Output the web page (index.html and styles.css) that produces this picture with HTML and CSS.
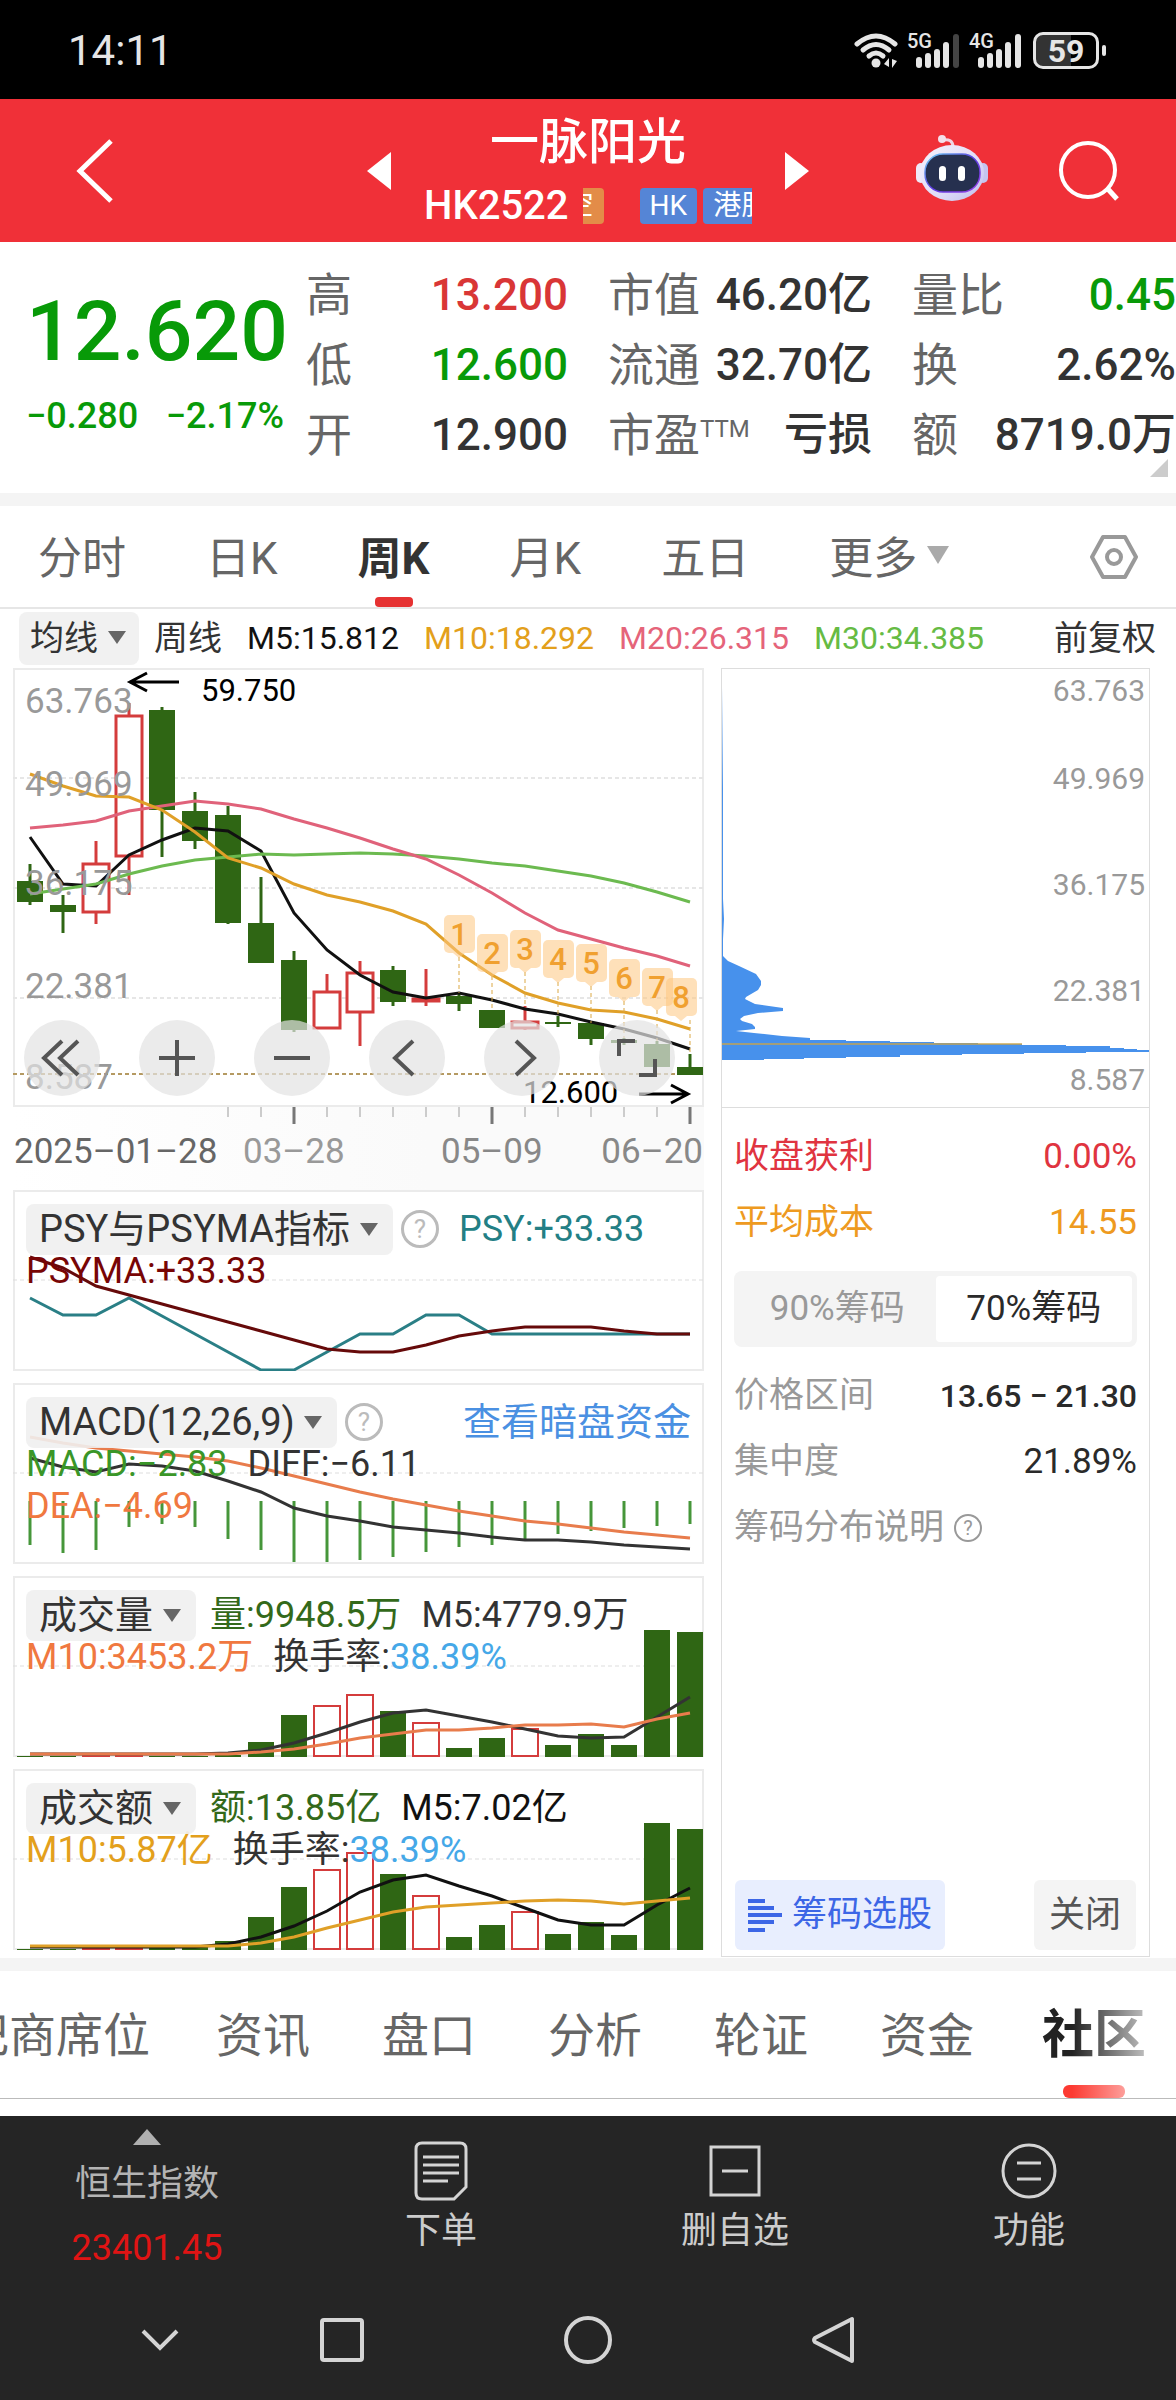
FILE: index.html
```html
<!DOCTYPE html>
<html lang="zh-CN">
<head>
    <meta charset="UTF-8">
    <meta name="viewport" content="width=device-width, initial-scale=1.0">
    <title>一脉阳光 HK2522</title>
    <link rel="stylesheet" href="styles.css">
</head>
<body>
    <!-- 状态栏 -->
    <div class="status-bar">
        <span class="clock">14:11</span>
        <div class="status-icons">
            <svg width="44" height="36" viewBox="0 0 44 36" fill="none" stroke="#e6e6e6" stroke-width="5" stroke-linecap="round">
                <path d="M3 11 Q22 -5 41 11"/>
                <path d="M9 17 Q22 6 35 17"/>
                <path d="M15 23 Q22 17 29 23"/>
                <circle cx="22" cy="30" r="4.5" fill="#e6e6e6" stroke="none"/>
                <path d="M30 31 L35 25 V34 Z M38 26 V35 L43 28 Z" fill="#e6e6e6" stroke="none"/>
            </svg>
            <div class="signal">
                <span>5G</span>
                <svg width="44" height="36" viewBox="0 0 44 36">
                    <g fill="#e6e6e6">
                        <rect x="0" y="24" width="6" height="11" rx="3"/>
                        <rect x="9" y="20" width="6" height="15" rx="3"/>
                        <rect x="18" y="16" width="6" height="19" rx="3"/>
                        <rect x="27" y="9" width="6" height="26" rx="3"/>
                    </g>
                    <rect x="37" y="1" width="6" height="34" rx="3" fill="#444"/>
                </svg>
            </div>
            <div class="signal">
                <span>4G</span>
                <svg width="44" height="36" viewBox="0 0 44 36" fill="#e6e6e6">
                    <rect x="0" y="24" width="6" height="11" rx="3"/>
                    <rect x="9" y="20" width="6" height="15" rx="3"/>
                    <rect x="18" y="16" width="6" height="19" rx="3"/>
                    <rect x="27" y="9" width="6" height="26" rx="3"/>
                    <rect x="37" y="1" width="6" height="34" rx="3"/>
                </svg>
            </div>
            <div class="battery">59</div>
        </div>
    </div>

    <!-- 标题栏 -->
    <header class="header">
        <button class="icon-btn back" aria-label="返回">
            <svg width="40" height="68" viewBox="0 0 40 68" fill="none" stroke="#fff" stroke-width="5">
                <path d="M36 4 L5 34 L36 64"/>
            </svg>
        </button>
        <div class="stock">
            <button class="icon-btn" aria-label="上一只">
                <svg width="24" height="38" viewBox="0 0 24 38"><path d="M24 0 V38 L0 19 Z" fill="#fff"/></svg>
            </button>
            <div class="stock-title">
                <h1>一脉阳光</h1>
                <div class="stock-sub">
                    <span class="code">HK2522</span>
                    <div class="tag-clip"><span class="tag tag-orange">空</span></div>
                    <div class="tags">
                        <span class="tag">HK</span>
                        <span class="tag">港股</span>
                    </div>
                </div>
            </div>
            <button class="icon-btn" aria-label="下一只">
                <svg width="24" height="38" viewBox="0 0 24 38"><path d="M0 0 V38 L24 19 Z" fill="#fff"/></svg>
            </button>
        </div>
        <button class="icon-btn robot" aria-label="智能助手">
            <svg width="72" height="66" viewBox="0 0 72 66">
                <defs>
                    <linearGradient id="head" x1="0" y1="0" x2="1" y2="1">
                        <stop offset="0" stop-color="#f6f2fb"/>
                        <stop offset="0.6" stop-color="#dfdcf8"/>
                        <stop offset="1" stop-color="#bdbcec"/>
                    </linearGradient>
                    <linearGradient id="rim" x1="0" y1="0" x2="1" y2="1">
                        <stop offset="0" stop-color="#6fd6f5"/>
                        <stop offset="0.5" stop-color="#5a3ce0"/>
                        <stop offset="1" stop-color="#9a40e8"/>
                    </linearGradient>
                </defs>
                <path d="M26 5 Q37 3 37 12" fill="none" stroke="#f0d5e4" stroke-width="3"/>
                <circle cx="26" cy="4" r="4" fill="#f4dfea"/>
                <rect x="0" y="28" width="10" height="20" rx="5" fill="#efe9f7"/>
                <rect x="62" y="28" width="10" height="20" rx="5" fill="#c5c5f0"/>
                <ellipse cx="36" cy="38" rx="32" ry="28" fill="url(#head)"/>
                <rect x="9" y="19" width="55" height="38" rx="18" fill="#26304f" stroke="url(#rim)" stroke-width="1.5"/>
                <rect x="23" y="31" width="7" height="15" rx="3.5" fill="#fff"/>
                <rect x="42" y="31" width="7" height="15" rx="3.5" fill="#fff"/>
            </svg>
        </button>
        <button class="icon-btn search" aria-label="搜索">
            <svg width="62" height="62" viewBox="0 0 62 62" fill="none" stroke="#fff" stroke-width="4">
                <circle cx="30" cy="31" r="27"/>
                <path d="M49 49 L59 60" stroke-width="5"/>
            </svg>
        </button>
    </header>

    <!-- 报价 -->
    <section class="quote">
        <div class="price">
            <div class="price-now">12.620</div>
            <div class="price-change"><span>−0.280</span><span>−2.17%</span></div>
        </div>
        <dl class="stats">
            <div><dt>高</dt><dd class="red">13.200</dd></div>
            <div><dt>市值</dt><dd>46.20亿</dd></div>
            <div><dt>量比</dt><dd class="green">0.45</dd></div>
            <div><dt>低</dt><dd class="green">12.600</dd></div>
            <div><dt>流通</dt><dd>32.70亿</dd></div>
            <div><dt>换</dt><dd>2.62%</dd></div>
            <div><dt>开</dt><dd>12.900</dd></div>
            <div><dt>市盈<sup>TTM</sup></dt><dd>亏损</dd></div>
            <div><dt>额</dt><dd>8719.0万</dd></div>
        </dl>
        <i class="corner"></i>
    </section>

    <!-- 周期切换 -->
    <nav class="period">
        <button>分时</button>
        <button>日K</button>
        <button class="active">周K</button>
        <button>月K</button>
        <button>五日</button>
        <button class="more">更多<i class="caret"></i></button>
        <button class="setting" aria-label="设置">
            <svg width="48" height="46" viewBox="0 0 48 46" fill="none" stroke="#999" stroke-width="4" stroke-linejoin="round">
                <path d="M13 3 H35 L46 23 L35 43 H13 L2 23 Z"/>
                <circle cx="24" cy="23" r="7"/>
            </svg>
        </button>
    </nav>

    <div class="ma-row">
        <div class="chip chip-small">
            <select aria-label="主图指标"><option>均线</option></select>
        </div>
        <span class="ma-name">周线</span>
        <span class="ma5">M5:15.812</span>
        <span class="ma10">M10:18.292</span>
        <span class="ma20">M20:26.315</span>
        <span class="ma30">M30:34.385</span>
        <button class="adjust">前复权</button>
    </div>

    <main class="charts">
        <div class="chart-col">
            <div class="chart-main">
                <svg id="kline" viewBox="0 0 691 522"></svg>
                <div class="tools">
                    <button aria-label="最左"><svg viewBox="0 0 76 76"><path d="M38 21 L20 38 L38 55 M54 21 L36 38 L54 55"/></svg></button>
                    <button aria-label="放大"><svg viewBox="0 0 76 76"><path d="M38 20 V56 M20 38 H56"/></svg></button>
                    <button aria-label="缩小"><svg viewBox="0 0 76 76"><path d="M20 38 H56"/></svg></button>
                    <button aria-label="左移"><svg viewBox="0 0 76 76"><path d="M44 21 L26 38 L44 55"/></svg></button>
                    <button aria-label="右移"><svg viewBox="0 0 76 76"><path d="M32 21 L50 38 L32 55"/></svg></button>
                    <button aria-label="全屏"><svg viewBox="0 0 76 76"><path d="M20 36 V21 H36 M56 39 V55 H40"/></svg></button>
                </div>
            </div>

            <div class="indicator">
                <svg id="psy" viewBox="0 0 691 181"></svg>
                <div class="legend">
                    <div class="legend-row">
                        <div class="chip"><select aria-label="指标"><option>PSY与PSYMA指标</option></select></div>
                        <button class="help" aria-label="说明">?</button>
                        <span class="teal">PSY:+33.33</span>
                    </div>
                    <div class="legend-row"><span class="maroon">PSYMA:+33.33</span></div>
                </div>
            </div>

            <div class="indicator">
                <svg id="macd" viewBox="0 0 691 181"></svg>
                <div class="legend">
                    <div class="legend-row">
                        <div class="chip"><select aria-label="指标"><option>MACD(12,26,9)</option></select></div>
                        <button class="help" aria-label="说明">?</button>
                        <a class="dark-link" href="#">查看暗盘资金</a>
                    </div>
                    <div class="legend-row"><span class="lime">MACD:−2.83</span><span>DIFF:−6.11</span></div>
                    <div class="legend-row"><span class="orange">DEA:−4.69</span></div>
                </div>
            </div>

            <div class="indicator">
                <svg id="volume" viewBox="0 0 691 181"></svg>
                <div class="legend">
                    <div class="legend-row">
                        <div class="chip"><select aria-label="指标"><option>成交量</option></select></div>
                        <span class="forest">量:9948.5万</span><span>M5:4779.9万</span>
                    </div>
                    <div class="legend-row"><span class="orange">M10:3453.2万</span><span>换手率:<b>38.39%</b></span></div>
                </div>
            </div>

            <div class="indicator">
                <svg id="amount" viewBox="0 0 691 181"></svg>
                <div class="legend">
                    <div class="legend-row">
                        <div class="chip"><select aria-label="指标"><option>成交额</option></select></div>
                        <span class="forest">额:13.85亿</span><span class="black">M5:7.02亿</span>
                    </div>
                    <div class="legend-row"><span class="gold">M10:5.87亿</span><span>换手率:<b>38.39%</b></span></div>
                </div>
            </div>
        </div>

        <!-- 筹码分布 -->
        <aside class="chips">
            <svg class="dist" viewBox="0 0 427 438">
                <path fill="#4791ec" d="M0 18 L1 120 L1 230 L2 250 L1 270 L1 287 L6 292 L17 297 L34 305 L39 312 L39 316 L36 321 L24 328 L23 330 L33 335 L61 339 L61 342 L36 344 L22 347 L18 350 L20 352 L30 355 L33 358 L33 360 L14 362 L32 364 L60 367 L88 369 V371 H124 V372 H168 V373 H212 V374 H256 V375 H300 V376 H344 V377 H388 V379 H402 V380 H415 V381 H427 V383 H364 V384 H302 V385 H240 V386 H178 V388 H124 V389 H82 V390 H42 V391 H0 Z"/>
                <path d="M0 375 H300" stroke="#c9a44a" stroke-opacity="0.7" stroke-width="2"/>
                <g font-size="30" fill="#999" text-anchor="end">
                    <text x="423" y="32">63.763</text>
                    <text x="423" y="120">49.969</text>
                    <text x="423" y="226">36.175</text>
                    <text x="423" y="332">22.381</text>
                    <text x="423" y="421">8.587</text>
                </g>
            </svg>
            <div class="chips-body">
                <div class="chips-row profit"><span>收盘获利</span><span>0.00%</span></div>
                <div class="chips-row cost"><span>平均成本</span><span>14.55</span></div>
                <div class="segment">
                    <input type="radio" name="ratio" id="ratio90"><label for="ratio90">90%筹码</label>
                    <input type="radio" name="ratio" id="ratio70" checked><label for="ratio70">70%筹码</label>
                </div>
                <div class="chips-row"><span>价格区间</span><strong>13.65 − 21.30</strong></div>
                <div class="chips-row"><span>集中度</span><em>21.89%</em></div>
                <div class="chips-row about"><span>筹码分布说明</span><button class="help help-small" aria-label="说明">?</button></div>
            </div>
            <div class="chips-foot">
                <button class="pick">
                    <svg width="34" height="33" viewBox="0 0 34 33" stroke="#3c66e6" stroke-width="4">
                        <path d="M0 2 H17 M0 9 H26 M0 16 H34 M0 23 H26 M0 31 H17"/>
                    </svg>
                    筹码选股
                </button>
                <button class="close">关闭</button>
            </div>
        </aside>
    </main>

    <!-- 内容标签 -->
    <nav class="tabs">
        <a href="#" class="first">经纪商席位</a>
        <a href="#">资讯</a>
        <a href="#">盘口</a>
        <a href="#">分析</a>
        <a href="#">轮证</a>
        <a href="#">资金</a>
        <a href="#" class="active">社区</a>
    </nav>

    <!-- 底部工具栏 -->
    <footer class="footer">
        <div class="toolbar">
            <button class="index">
                <i class="up"></i>
                <span>恒生指数</span>
                <span class="index-value">23401.45</span>
            </button>
            <button>
                <svg width="60" height="60" viewBox="0 0 60 60" fill="none" stroke="#d4d4d4" stroke-width="3">
                    <path d="M11 2 H49 Q55 2 55 8 V46 L43 58 H11 Q5 58 5 52 V8 Q5 2 11 2 Z"/>
                    <path d="M12 16 H48 M12 24 H48 M12 32 H48 M12 40 H37"/>
                </svg>
                <span>下单</span>
            </button>
            <button>
                <svg width="60" height="60" viewBox="0 0 60 60" fill="none" stroke="#d4d4d4" stroke-width="3">
                    <path d="M6 6 H54 V54 H6 Z M17 30 H43"/>
                </svg>
                <span>删自选</span>
            </button>
            <button>
                <svg width="60" height="60" viewBox="0 0 60 60" fill="none" stroke="#d4d4d4" stroke-width="3">
                    <circle cx="30" cy="30" r="26"/>
                    <path d="M18 22 H42 M18 38 H42"/>
                </svg>
                <span>功能</span>
            </button>
        </div>
        <div class="sys-nav">
            <button aria-label="收起"><svg width="40" height="24" viewBox="0 0 40 24"><path d="M3 3 L20 20 L37 3"/></svg></button>
            <button aria-label="最近任务"><svg width="46" height="46" viewBox="0 0 46 46"><rect x="3" y="3" width="40" height="40" rx="2"/></svg></button>
            <button aria-label="主页"><svg width="50" height="50" viewBox="0 0 50 50"><circle cx="25" cy="25" r="22"/></svg></button>
            <button aria-label="返回"><svg width="44" height="50" viewBox="0 0 44 50"><path d="M40 4 V46 L3 27 Q1 25 3 23 Z" stroke-linejoin="round"/></svg></button>
        </div>
    </footer>

    <script src="script.js"></script>
</body>
</html>
```
FILE: styles.css
```css
* {
    margin: 0;
    padding: 0;
    box-sizing: border-box;
}

body {
    font-family: Roboto, "Noto Sans CJK SC", sans-serif;
    background-color: #fff;
    color: #333;
}

button, select {
    font: inherit;
    color: inherit;
    background: none;
    border: none;
    cursor: pointer;
}

a {
    color: inherit;
    text-decoration: none;
}

svg {
    display: block;
}

.red { color: #d93636; }
.green { color: #089a08; }
.teal { color: #237f85; }
.maroon { color: #780505; }
.lime { color: #3a9628; }
.orange { color: #f07840; }
.forest { color: #33691a; }
.gold { color: #e3a01c; }
.black { color: #111; }

/* 状态栏 */
.status-bar {
    display: flex;
    align-items: center;
    justify-content: space-between;
    height: 99px;
    padding: 2px 77px 0 68px;
    background-color: #000;
    color: #e6e6e6;
}

.clock {
    font-size: 42px;
}

.status-icons {
    display: flex;
    align-items: center;
    gap: 11px;
}

.signal {
    position: relative;
    padding-left: 7px;
}

.signal span {
    position: absolute;
    top: -4px;
    left: -2px;
    font-size: 20px;
    font-weight: 500;
    line-height: 24px;
}

.battery {
    position: relative;
    width: 66px;
    height: 37px;
    border: 3px solid #e6e6e6;
    border-radius: 10px;
    background: linear-gradient(to right, #333 59%, #000 59%);
    font-size: 32px;
    font-weight: 700;
    line-height: 32px;
    text-align: center;
}

.battery::after {
    content: "";
    position: absolute;
    top: 10px;
    right: -10px;
    width: 4px;
    height: 11px;
    border-radius: 2px;
    background-color: #e6e6e6;
}

/* 标题栏 */
.header {
    display: grid;
    grid-template-columns: 1fr 442px 1fr;
    align-items: center;
    height: 143px;
    background-color: #f03038;
    color: #fff;
    position: relative;
}

.icon-btn {
    display: block;
}

.back {
    justify-self: start;
    margin-left: 75px;
}

.stock {
    display: flex;
    align-items: center;
    justify-content: space-between;
}

.stock-title {
    display: flex;
    flex-direction: column;
    align-items: center;
    padding-top: 4px;
}

.stock-title h1 {
    font-size: 49px;
    font-weight: 500;
    line-height: 66px;
}

.stock-sub {
    display: flex;
    align-items: center;
    width: 328px;
    height: 60px;
}

.code {
    font-size: 40px;
    font-weight: 500;
}

.tag-clip {
    display: flex;
    justify-content: flex-end;
    overflow: hidden;
    width: 21px;
    margin: 0 36px 0 14px;
}

.tags {
    display: flex;
    gap: 6px;
    flex: 1;
    overflow: hidden;
}

.tag {
    flex-shrink: 0;
    padding: 0 10px;
    border-radius: 4px;
    background-color: #5585d6;
    font-size: 28px;
    line-height: 36px;
}

.tag-orange {
    background-color: #e38c48;
}

.robot, .search {
    position: absolute;
    top: 36px;
}

.robot {
    right: 188px;
}

.search {
    top: 40px;
    right: 56px;
}

/* 报价 */
.quote {
    position: relative;
    display: grid;
    grid-template-columns: 306px 1fr;
    padding: 18px 0 23px;
    border-bottom: 13px solid #f4f4f4;
}

.price {
    display: flex;
    flex-direction: column;
    justify-content: center;
    padding: 6px 22px 0 26px;
    color: #089a08;
}

.price-now {
    font-size: 84px;
    font-weight: 500;
    line-height: 96px;
    text-align: center;
}

.price-change {
    display: flex;
    justify-content: space-between;
    font-size: 36px;
    font-weight: 500;
    line-height: 72px;
}

.stats {
    display: grid;
    grid-template-columns: 262fr 264fr 264fr;
    column-gap: 40px;
    font-size: 44px;
    line-height: 70px;
}

.stats div {
    display: flex;
    justify-content: space-between;
    white-space: nowrap;
}

.stats dt {
    font-size: 46px;
    color: #666;
}

.stats dd {
    font-weight: 500;
}

.stats sup {
    font-size: 24px;
    line-height: 24px;
    vertical-align: 14px;
}

.corner {
    position: absolute;
    right: 8px;
    bottom: 16px;
    border-left: 18px solid transparent;
    border-bottom: 18px solid #ccc;
}

/* 周期切换 */
.period {
    display: flex;
    align-items: center;
    gap: 80px;
    height: 103px;
    padding: 0 38px;
    border-bottom: 2px solid #e6e6e6;
    font-size: 44px;
    color: #666;
}

.period button {
    position: relative;
    height: 101px;
    padding-bottom: 4px;
}

.period .active {
    font-weight: 700;
    color: #333;
}

.period .active::after {
    content: "";
    position: absolute;
    left: 50%;
    bottom: 0;
    width: 38px;
    height: 10px;
    margin-left: -19px;
    border-radius: 4px;
    background-color: #e63232;
}

.more {
    display: flex;
    align-items: center;
    gap: 10px;
}

.caret {
    border: 11px solid transparent;
    border-top: 18px solid #aaa;
    border-bottom: none;
}

.period .setting {
    margin-left: auto;
    padding: 0;
}

/* 均线 */
.ma-row {
    display: flex;
    align-items: center;
    gap: 25px;
    padding: 3px 20px 3px 19px;
    font-size: 32px;
    line-height: 53px;
}

.ma-row .ma-name {
    margin-left: -10px;
    font-size: 34px;
}

.ma5 { color: #111; }
.ma10 { color: #e3a01c; }
.ma20 { color: #e5647a; }
.ma30 { color: #66bb44; }

.adjust {
    margin-left: auto;
    font-size: 34px;
    line-height: 53px;
}

.chip {
    position: relative;
    border-radius: 8px;
    background-color: rgba(240, 240, 240, 0.9);
}

.chip select {
    display: block;
    appearance: none;
    padding: 0 42px 0 13px;
    height: 51px;
    font-size: 38px;
    color: #333;
}

.chip::after {
    content: "";
    position: absolute;
    top: 19px;
    right: 15px;
    border: 9px solid transparent;
    border-top: 13px solid #666;
    border-bottom: none;
    pointer-events: none;
}

.chip-small select {
    height: 53px;
    padding: 0 41px 0 11px;
    font-size: 34px;
}

.chip-small::after {
    right: 13px;
}

/* 图表 */
.charts {
    display: grid;
    grid-template-columns: 691fr 429fr;
    column-gap: 17px;
    padding: 0 26px 1px 13px;
    border-bottom: 13px solid #f4f4f4;
}

.chart-col {
    display: flex;
    flex-direction: column;
    gap: 12px;
    padding-bottom: 7px;
}

.chart-main {
    position: relative;
    margin-bottom: -12px;
    background: linear-gradient(to right, #fff, #fafafa 60%);
}

.chart-col svg {
    width: 100%;
}

.tools {
    position: absolute;
    top: 352px;
    left: 11px;
    right: 29px;
    display: flex;
    justify-content: space-between;
}

.tools button {
    width: 76px;
    height: 76px;
    border-radius: 50%;
    background-color: rgba(227, 227, 227, 0.7);
}

.tools path {
    fill: none;
    stroke: #555;
    stroke-width: 4;
}

.indicator {
    position: relative;
}

.legend {
    position: absolute;
    top: 18px;
    left: 13px;
    right: 13px;
    font-size: 36px;
    line-height: 42px;
    white-space: nowrap;
}

.legend-row {
    display: flex;
    align-items: center;
    gap: 20px;
    height: 42px;
}

.legend-row .chip {
    margin-right: -6px;
}

.legend-row b {
    font-weight: 400;
    color: #45a8e8;
}

.help {
    width: 38px;
    height: 38px;
    border: 3px solid #bbb;
    border-radius: 50%;
    font-size: 26px;
    line-height: 32px;
    color: #bbb;
}

.legend-row .help {
    margin-left: -6px;
}

.dark-link {
    margin-left: auto;
    font-size: 38px;
    color: #4a90e2;
}

/* 筹码分布 */
.chips {
    display: flex;
    flex-direction: column;
    border: 1px solid #ddd;
}

.dist {
    width: 100%;
    border-bottom: 1px solid #ddd;
}

.chips-body {
    padding: 16px 12px 0 12px;
    font-size: 35px;
    line-height: 66px;
    color: #999;
}

.chips-row {
    display: flex;
    justify-content: space-between;
}

.chips-row em, .chips-row strong {
    font-style: normal;
    font-weight: 400;
    color: #2a2a2a;
}

.chips-row strong {
    font-size: 32px;
    font-weight: 500;
}

.profit { color: #e03440; }
.cost { color: #ee9a20; }

.about {
    justify-content: flex-start;
    align-items: center;
    gap: 10px;
}

.help-small {
    width: 28px;
    height: 28px;
    border: 2px solid #999;
    font-size: 20px;
    line-height: 24px;
    color: #999;
}

.segment {
    display: grid;
    grid-template-columns: 1fr 1fr;
    margin: 15px 0 16px;
    padding: 5px;
    border-radius: 8px;
    background-color: #f4f4f4;
    text-align: center;
}

.segment input {
    position: absolute;
    opacity: 0;
}

.segment label {
    border-radius: 4px;
}

.segment input:checked + label {
    background-color: #fff;
    color: #2a2a2a;
}

.chips-foot {
    display: flex;
    justify-content: space-between;
    margin-top: auto;
    padding: 0 13px 6px;
    font-size: 35px;
    line-height: 70px;
}

.pick {
    display: flex;
    align-items: center;
    gap: 10px;
    padding: 0 13px;
    border-radius: 6px;
    background-color: #e8eefe;
    color: #3c66e6;
}

.close {
    padding: 0 15px;
    border-radius: 6px;
    background-color: #f4f4f4;
    font-size: 36px;
    color: #555;
}

/* 内容标签 */
.tabs {
    position: relative;
    display: flex;
    align-items: center;
    justify-content: flex-end;
    gap: 72px;
    overflow: hidden;
    height: 128px;
    margin-bottom: 17px;
    padding-right: 30px;
    border-bottom: 1px solid #bbb;
    font-size: 47px;
    white-space: nowrap;
    color: #666;
}

.tabs a {
    position: relative;
    padding-top: 3px;
    line-height: 124px;
}

.tabs .first {
    margin-right: -6px;
}

.tabs .active {
    margin-left: -4px;
    font-size: 52px;
    font-weight: 700;
    color: #222;
}

.tabs .active::after {
    content: "";
    position: absolute;
    left: 50%;
    bottom: 0;
    width: 62px;
    height: 13px;
    margin-left: -31px;
    border-radius: 6px;
    background-color: #fc3a32;
}

/* 右侧渐隐 */
.tabs::after {
    content: "";
    position: absolute;
    top: 0;
    right: 0;
    width: 104px;
    height: 127px;
    background: linear-gradient(to right, rgba(255, 255, 255, 0), rgba(255, 255, 255, 0.8) 80%);
}

/* 底部 */
.footer {
    background-color: #252525;
    color: #ccc;
}

.toolbar {
    display: grid;
    grid-template-columns: repeat(4, 1fr);
    height: 164px;
    font-size: 36px;
}

.toolbar button {
    display: flex;
    flex-direction: column;
    align-items: center;
    gap: 5px;
    padding-top: 25px;
    line-height: 50px;
}

.toolbar .index {
    gap: 14px;
    padding-top: 13px;
    color: #b4b4b4;
}

.up {
    border: 14px solid transparent;
    border-top: none;
    border-bottom: 16px solid #b0b0b0;
}

.toolbar .index-value {
    color: #e01414;
}

.sys-nav {
    display: grid;
    grid-template-columns: 219fr 246fr 246fr 246fr 219fr;
    align-items: center;
    height: 120px;
}

.sys-nav button {
    justify-self: center;
}

.sys-nav button:first-child {
    justify-self: end;
    margin-right: 39px;
}

.sys-nav svg {
    fill: none;
    stroke: #d4d4d4;
    stroke-width: 4;
}
```
FILE: script.js
```js
const NS = "http://www.w3.org/2000/svg";
const GREEN = "#2f6614";
const RED = "#d43c3c";
const START = 17;   // 第一根K线中心
const STEP = 33;
const BAR = 26;

function add(svg, name, attrs, text) {
    const el = document.createElementNS(NS, name);
    for (const key in attrs) el.setAttribute(key, attrs[key]);
    if (text) el.textContent = text;
    svg.appendChild(el);
    return el;
}

function xOf(i) {
    return START + STEP * i;
}

function line(svg, data, color) {
    const points = data.map((y, i) => xOf(i) + "," + y).join(" ");
    add(svg, "polyline", { points: points, fill: "none", stroke: color, "stroke-width": 3 });
}

function frame(svg, height) {
    add(svg, "rect", { x: 1, y: 1, width: 689, height: height - 2, fill: "#fff", stroke: "#ebebeb", "stroke-width": 2 });
}

function dashed(svg, y, color, width) {
    add(svg, "path", { d: "M0 " + y + " H691", stroke: color, "stroke-width": width, "stroke-dasharray": "4 3" });
}

function box(svg, i, top, bottom, red, border) {
    if (red) {
        add(svg, "rect", { x: xOf(i) - 13, y: top + 1, width: BAR, height: Math.max(bottom - top - 2, 1), fill: "#fff", stroke: RED, "stroke-width": border });
    } else {
        add(svg, "rect", { x: xOf(i) - 13, y: top, width: BAR, height: Math.max(bottom - top, 1), fill: GREEN });
    }
}

// K线: [最高, 上沿, 下沿, 最低, 是否上涨]
const candles = [
    [196, 213, 234, 237], [227, 237, 244, 265], [173, 195, 245, 256, 1], [35, 47, 189, 227, 1],
    [39, 42, 142, 189], [124, 143, 173, 181], [138, 147, 255, 256], [209, 255, 295, 295],
    [283, 292, 362, 364], [306, 323, 361, 361, 1], [293, 304, 345, 378, 1], [298, 302, 334, 338],
    [301, 330, 334, 338, 1], [325, 328, 336, 343], [342, 342, 360, 360], [338, 353, 361, 362, 1],
    [348, 354, 356, 359], [355, 355, 371, 377], [370, 372, 375, 377], [373, 376, 399, 399],
    [386, 399, 407, 407]
];

const kline = document.getElementById("kline");
frame(kline, 439);
[110, 220, 330].forEach(y => dashed(kline, y, "#e6e6e6", 2));
dashed(kline, 406, "#b59a62", 2);

candles.forEach(([high, top, bottom, low, red], i) => {
    add(kline, "path", { d: "M" + xOf(i) + " " + high + " V" + low, stroke: red ? RED : GREEN, "stroke-width": 3 });
    box(kline, i, top, bottom, red, 3);
});

line(kline, [169, 216, 218, 187, 172, 160, 163, 183, 245, 282, 307, 324, 330, 325, 332, 341, 346, 354, 361, 370, 381], "#111");
line(kline, [226, 221, 216, 206, 198, 192, 189, 186, 187, 186, 185, 186, 188, 191, 195, 198, 203, 208, 215, 224, 234], "#6cba50");
line(kline, [160, 157, 153, 143, 138, 133, 136, 141, 151, 160, 170, 181, 191, 207, 225, 245, 262, 271, 280, 288, 298], "#e0627a");
line(kline, [106, 118, 128, 129, 142, 164, 190, 200, 216, 227, 234, 243, 256, 285, 307, 325, 335, 342, 344, 351, 361], "#e0a028");

[["63.763", 45], ["49.969", 128], ["36.175", 227], ["22.381", 330], ["8.587", 421]].forEach(([value, y]) => {
    add(kline, "text", { x: 12, y: y, "font-size": 35, fill: "#999" }, value);
});

// 最高价 / 最低价
add(kline, "text", { x: 188, y: 33, "font-size": 31, fill: "#000" }, "59.750");
add(kline, "text", { x: 510, y: 435, "font-size": 31, fill: "#000" }, "12.600");
add(kline, "path", { d: "M166 14 H117 M134 5 L117 14 L134 23 M626 426 H675 M658 417 L675 426 L658 435", fill: "none", stroke: "#000", "stroke-width": 3 });

// 九转序列
[247, 266, 262, 272, 276, 291, 300, 310].forEach((top, n) => {
    const x = n === 7 ? 668 : xOf(13 + n);
    const end = candles[13 + n][0];
    add(kline, "path", { d: "M" + xOf(13 + n) + " " + (top + 42) + " V" + end, stroke: "#dba845", "stroke-dasharray": "4 3" });
    add(kline, "rect", { x: x - 15, y: top, width: 31, height: 38, rx: 5, fill: "#fdc780", "fill-opacity": 0.55 });
    add(kline, "path", { d: "M" + (x - 6) + " " + (top + 38) + " h12 l-6 5 Z", fill: "#fdc780", "fill-opacity": 0.55 });
    add(kline, "text", { x: x, y: top + 30, "font-size": 31, "font-weight": 500, fill: "#f0a030", "text-anchor": "middle" }, String(n + 1));
});

// 日期轴
for (let i = 6; i <= 20; i++) {
    const major = i % 6 === 2;
    add(kline, "path", { d: "M" + xOf(i) + " 439 V" + (major ? 456 : 449), stroke: major ? "#777" : "#ccc", "stroke-width": major ? 3 : 2 });
}
add(kline, "text", { x: 1, y: 495, "font-size": 35, fill: "#666" }, "2025–01–28");
add(kline, "text", { x: 230, y: 495, "font-size": 35, fill: "#999" }, "03–28");
add(kline, "text", { x: 428, y: 495, "font-size": 35, fill: "#888" }, "05–09");
add(kline, "text", { x: 690, y: 495, "font-size": 35, fill: "#888", "text-anchor": "end" }, "06–20");

// PSY
const psy = document.getElementById("psy");
frame(psy, 181);
dashed(psy, 90, "#ddd", 1);
line(psy, [108, 125, 125, 108, 126, 144, 162, 180, 180, 162, 144, 144, 125, 125, 144, 144, 144, 144, 144, 144, 144], "#2a7f86");
line(psy, [67, 78, 96, 105, 114, 123, 132, 141, 150, 159, 162, 162, 155, 146, 141, 137, 137, 137, 141, 144, 144], "#660a0a");

// MACD
const macd = document.getElementById("macd");
frame(macd, 181);
dashed(macd, 90, "#ddd", 1);
[162, 170, 167, 144, 141, 144, 156, 167, 179, 179, 177, 174, 169, 164, 162, 156, 151, 148, 145, 143, 141].forEach((y, i) => {
    add(macd, "path", { d: "M" + xOf(i) + " 118 V" + y, stroke: "#46963a", "stroke-width": 3 });
});
line(macd, [75, 84, 89, 81, 83, 88, 98, 109, 125, 133, 138, 144, 147, 150, 154, 157, 157, 159, 162, 164, 166], "#333");
line(macd, [54, 60, 65, 68, 71, 74, 78, 85, 93, 101, 109, 116, 122, 128, 133, 138, 141, 145, 149, 152, 155], "#e87c4c");

// 成交量 / 成交额
const redBars = [2, 3, 9, 10, 12, 15];

function bars(svg, tops) {
    frame(svg, 181);
    dashed(svg, 90, "#ddd", 1);
    tops.forEach((top, i) => box(svg, i, top, 181, redBars.includes(i), 2));
}

const volume = document.getElementById("volume");
bars(volume, [180, 180, 179, 179, 180, 180, 179, 166, 139, 129, 118, 135, 146, 172, 162, 152, 169, 158, 169, 54, 56]);
line(volume, [178, 178, 178, 178, 178, 178, 177, 174, 167, 157, 146, 137, 134, 140, 146, 153, 160, 162, 161, 141, 121], "#333");
line(volume, [178, 178, 178, 178, 178, 178, 178, 176, 173, 168, 162, 158, 154, 154, 152, 149, 149, 148, 151, 143, 137], "#e87c4c");

const amount = document.getElementById("amount");
bars(amount, [180, 180, 179, 179, 178, 178, 172, 148, 118, 100, 83, 105, 126, 168, 156, 142, 165, 153, 166, 54, 60]);
line(amount, [178, 178, 178, 178, 178, 178, 175, 168, 157, 142, 123, 111, 106, 117, 127, 139, 151, 156, 156, 136, 119], "#111");
line(amount, [177, 177, 177, 177, 177, 177, 177, 174, 168, 159, 151, 143, 138, 136, 134, 132, 131, 132, 135, 132, 129], "#e0a028");
```
